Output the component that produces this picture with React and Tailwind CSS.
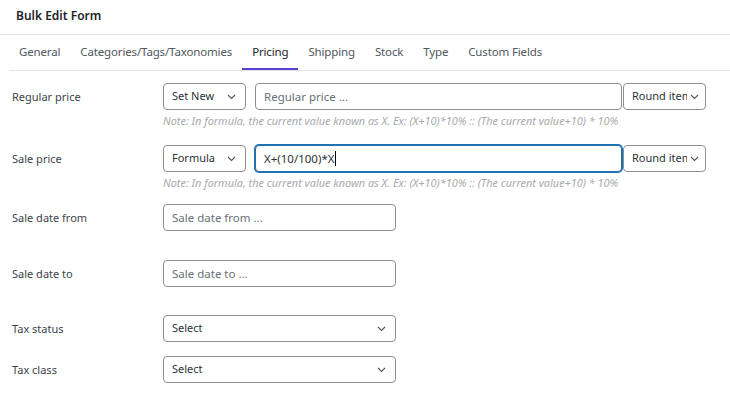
import React from 'react';

const tabs = ['General', 'Categories/Tags/Taxonomies', 'Pricing', 'Shipping', 'Stock', 'Type', 'Custom Fields'];

const NOTE = 'Note: In formula, the current value known as X. Ex: (X+10)*10% :: (The current value+10) * 10%';

const Chevron = () => (
  <svg width="9" height="6" viewBox="0 0 9 6" fill="none" className="shrink-0">
    <path d="M1 1l3.5 3.5L8 1" stroke="#50575e" strokeWidth="1.1" />
  </svg>
);

const SelectBox = ({ value, className = '', textWidth }) => (
  <div className={`flex h-[27px] items-center justify-between rounded-[4px] border border-[#8c8f94] bg-white pl-[8px] text-[11px] text-[#2c3338] ${className}`}>
    <span className="overflow-hidden whitespace-nowrap" style={textWidth ? { width: textWidth } : undefined}>{value}</span>
    <Chevron />
  </div>
);

const TextBox = ({ placeholder, className = '' }) => (
  <div className={`flex h-[27px] items-center rounded-[4px] border border-[#8c8f94] bg-white px-[8px] text-[11.5px] text-[#6b7075] ${className}`}>
    {placeholder}
  </div>
);

const Label = ({ children }) => (
  <div className="flex h-[27px] w-[151px] shrink-0 items-center pt-[1px] text-[11px] text-[#3c434a]">{children}</div>
);

const Note = () => (
  <div className="mt-[4px] ml-[151px] h-[14px] text-[10.9px] leading-[14px] italic text-[#a7aaad]">{NOTE}</div>
);

export default function App() {
  return (
    <div className="h-[398px] w-[730px] overflow-hidden bg-white" style={{ fontFamily: '"Noto Sans", sans-serif' }}>
      <div className="flex h-[35px] items-center border-b border-[#e2e4e7] px-[16px] pb-[2px]">
        <h1 className="text-[12px] font-semibold text-[#1d2327]">Bulk Edit Form</h1>
      </div>

      <div className="ml-[9px] flex h-[36px] border-b border-[#e2e4e7]">
        {tabs.map((t) => (
          <div
            key={t}
            className={`flex items-center px-[10px] pt-[1px] text-[11.5px] tracking-[-0.15px] ${
              t === 'Pricing'
                ? 'border-b-2 border-[#5b3fd1] text-[#1d2327]'
                : 'border-b-2 border-transparent text-[#50575e]'
            }`}
          >
            {t}
          </div>
        ))}
      </div>

      <div className="pl-[12px]">
        <div className="mt-[12px]">
          <div className="flex items-center">
            <Label>Regular price</Label>
            <SelectBox value="Set New" className="w-[83px] pr-[9px]" />
            <TextBox placeholder="Regular price ..." className="ml-[9px] w-[367px]" />
            <SelectBox value="Round item" className="ml-[1px] w-[83px] pr-[6px]" textWidth="55px" />
          </div>
          <Note />
        </div>

        <div className="mt-[17px]">
          <div className="flex items-center">
            <Label>Sale price</Label>
            <SelectBox value="Formula" className="w-[83px] pr-[9px]" />
            <div className="ml-[9px] flex h-[27px] w-[367px] items-center rounded-[4px] border border-[#2271b1] bg-white px-[8px] text-[11.5px] text-[#2c3338] shadow-[0_0_0_1px_#2271b1]">
              X+(10/100)*X<span className="ml-[1px] inline-block h-[15px] w-[1px] bg-black" />
            </div>
            <SelectBox value="Round item" className="ml-[1px] w-[83px] pr-[6px]" textWidth="55px" />
          </div>
          <Note />
        </div>

        <div className="mt-[14px] flex items-center">
          <Label>Sale date from</Label>
          <TextBox placeholder="Sale date from ..." className="w-[233px]" />
        </div>

        <div className="mt-[29px] flex items-center">
          <Label>Sale date to</Label>
          <TextBox placeholder="Sale date to ..." className="w-[233px]" />
        </div>

        <div className="mt-[28px] flex items-center">
          <Label>Tax status</Label>
          <SelectBox value="Select" className="w-[233px] pr-[9px]" />
        </div>

        <div className="mt-[14px] flex items-center">
          <Label>Tax class</Label>
          <SelectBox value="Select" className="w-[233px] pr-[9px]" />
        </div>
      </div>
    </div>
  );
}
